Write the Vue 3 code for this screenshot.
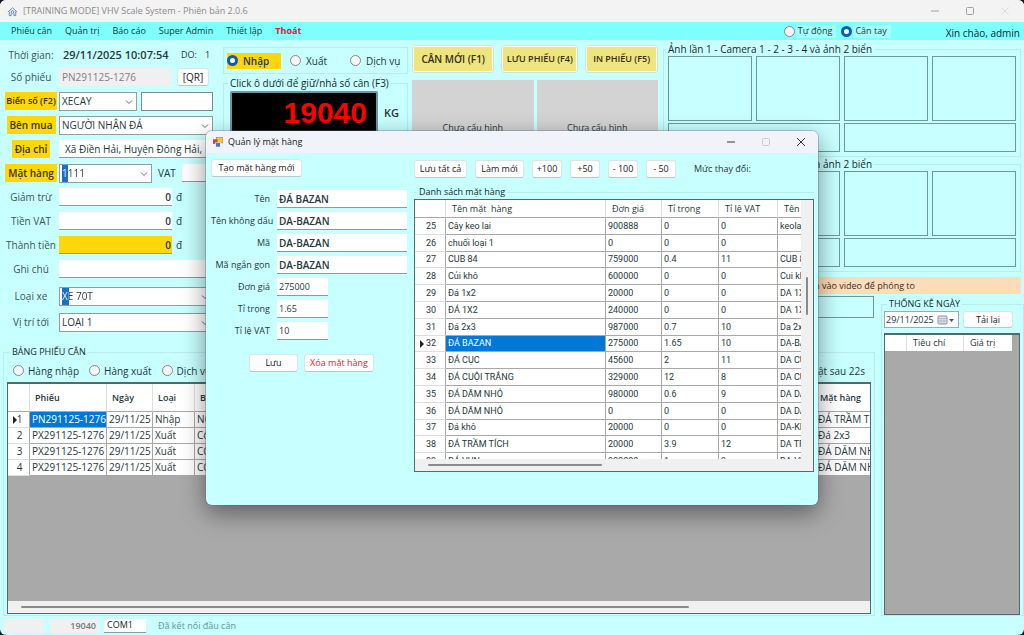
<script setup>
import { ref } from 'vue'

const menu = ['Phiếu cân', 'Quản trị', 'Báo cáo', 'Super Admin', 'Thiết lập']
const mode = ref('manual')
const kind = ref('in')
const filter = ref('')

const amounts = [
  { id: 'discount', label: 'Giảm trừ', value: '0' },
  { id: 'vat-money', label: 'Tiền VAT', value: '0' },
  { id: 'total', label: 'Thành tiền', value: '0', gold: true },
]

const tickets = [
  ['PN291125-1276', '29/11/25', 'Nhập', 'NGƯỜI NHẬN ĐÁ', 'ĐÁ TRẦM TÍCH'],
  ['PX291125-1276', '29/11/25', 'Xuất', 'Công ty', 'Đá 2x3'],
  ['PX291125-1276', '29/11/25', 'Xuất', 'CÔNG TY', 'ĐÁ DĂM NHỎ'],
  ['PX291125-1276', '29/11/25', 'Xuất', 'CÔNG TY', 'ĐÁ DĂM NHỎ'],
]

const fields = [
  { id: 'f-name', label: 'Tên', value: 'ĐÁ BAZAN', wide: true },
  { id: 'f-plain', label: 'Tên không dấu', value: 'DA-BAZAN', wide: true },
  { id: 'f-code', label: 'Mã', value: 'DA-BAZAN', wide: true },
  { id: 'f-short', label: 'Mã ngắn gọn', value: 'DA-BAZAN', wide: true },
  { id: 'f-price', label: 'Đơn giá', value: '275000' },
  { id: 'f-density', label: 'Tỉ trọng', value: '1.65' },
  { id: 'f-vat', label: 'Tỉ lệ VAT', value: '10' },
]

const steps = ['+100', '+50', '- 100', '- 50']

const items = [
  [25, 'Cây keo lai', '900888', '0', '0', 'keolai'],
  [26, 'chuối loại 1', '0', '0', '0', ''],
  [27, 'CUB 84', '759000', '0.4', '11', 'CUB 84'],
  [28, 'Củi khô', '600000', '0', '0', 'Cui kho'],
  [29, 'Đá 1x2', '20000', '0', '0', 'DA 1X2'],
  [30, 'ĐÁ 1X2', '240000', '0', '0', 'DA 1X2'],
  [31, 'Đá 2x3', '987000', '0.7', '10', 'Da 2x3'],
  [32, 'ĐÁ BAZAN', '275000', '1.65', '10', 'DA-BAZAN'],
  [33, 'ĐÁ CỤC', '45600', '2', '11', 'DA CUC'],
  [34, 'ĐÁ CUỘI TRẮNG', '329000', '12', '8', 'DA CUOI'],
  [35, 'ĐÁ DĂM NHỎ', '980000', '0.6', '9', 'DA DAM'],
  [36, 'ĐÁ DĂM NHỎ', '0', '0', '0', 'DA DAM'],
  [37, 'Đá khô', '20000', '0', '0', 'DA-KHO'],
  [38, 'ĐÁ TRẦM TÍCH', '20000', '3.9', '12', 'DA TRAM'],
  [39, 'ĐÁ VỤN', '980000', '1', '9', 'DA-VUN'],
]
</script>

<template>
  <div class="window">
    <header class="titlebar">
      <svg class="logo" viewBox="0 0 12 12" fill="none" stroke="#5f82b4" stroke-width="1">
        <path d="M1 6.500 6 2l5 4.500M2.500 6v4.500h2V8M9.500 6v4.500h-2V8" />
        <circle cx="6" cy="6.500" r="1.500" />
      </svg>
      <span>[TRAINING MODE] VHV Scale System - Phiên bản 2.0.6</span>
      <div class="winbtns">
        <button aria-label="Thu nhỏ"><svg viewBox="0 0 10 10"><path d="M1 5h8" /></svg></button>
        <button aria-label="Phóng to"><svg viewBox="0 0 10 10"><rect x="1.500" y="1.500" width="7" height="7" rx="1" /></svg></button>
        <button class="faint" aria-label="Đóng"><svg viewBox="0 0 10 10"><path d="M1.500 1.500l7 7M8.500 1.500l-7 7" /></svg></button>
      </div>
    </header>

    <nav class="menubar">
      <a v-for="m in menu" :key="m" href="#">{{ m }}</a>
      <a href="#" class="exit">Thoát</a>
      <div class="modes">
        <label><input v-model="mode" type="radio" name="mode" value="auto" />Tự động</label>
        <label><input v-model="mode" type="radio" name="mode" value="manual" />Cân tay</label>
      </div>
      <span class="hello">Xin chào, admin</span>
    </nav>

    <main class="body">
      <div class="entry">
        <section class="form">
          <div class="row first">
            <span class="lab">Thời gian:</span>
            <strong class="clock">29/11/2025 10:07:54</strong>
            <span class="do">DO:</span><span class="do-n">1</span>
          </div>
          <div class="row">
            <label class="lab" for="ticket">Số phiếu</label>
            <input id="ticket" class="txt amount off" value="PN291125-1276" disabled />
            <button class="btn qr">[QR]</button>
          </div>
          <div class="row">
            <label class="lab key" for="plate"><span>Biển số (F2)</span></label>
            <div class="combo plate">
              <select id="plate"><option>XECAY</option></select>
              <svg class="chev" viewBox="0 0 8 8"><path d="M1 2.500l3 3 3-3" /></svg>
            </div>
            <input class="txt boxed grow" aria-label="Số xe" />
          </div>
          <div class="row">
            <label class="lab key" for="buyer"><span>Bên mua</span></label>
            <div class="combo grow">
              <select id="buyer"><option>NGƯỜI NHẬN ĐÁ</option></select>
              <svg class="chev" viewBox="0 0 8 8"><path d="M1 2.500l3 3 3-3" /></svg>
            </div>
          </div>
          <div class="row">
            <label class="lab key" for="addr"><span>Địa chỉ</span></label>
            <input id="addr" class="txt grow strong" value="Xã Điền Hải, Huyện Đông Hải," />
          </div>
          <div class="row">
            <label class="lab key" for="goods"><span>Mặt hàng</span></label>
            <div class="combo goods">
              <input id="goods" class="picked narrow" value="1111" />
              <svg class="chev" viewBox="0 0 8 8"><path d="M1 2.500l3 3 3-3" /></svg>
            </div>
            <label class="vat" for="vat">VAT</label>
            <input id="vat" class="txt grow" />
          </div>
          <div v-for="a in amounts" :key="a.id" class="row">
            <label class="lab" :for="a.id">{{ a.label }}</label>
            <input :id="a.id" class="txt amount right" :class="{ gold: a.gold }" :value="a.value" />
            <span class="unit">đ</span>
          </div>
          <div class="row">
            <label class="lab" for="note">Ghi chú</label>
            <input id="note" class="txt grow" />
          </div>
          <div class="row tall">
            <label class="lab" for="truck">Loại xe</label>
            <div class="combo grow">
              <input id="truck" class="picked" value="XE 70T" />
              <svg class="chev" viewBox="0 0 8 8"><path d="M1 2.500l3 3 3-3" /></svg>
            </div>
          </div>
          <div class="row tall">
            <label class="lab" for="dest">Vị trí tới</label>
            <div class="combo grow">
              <select id="dest"><option>LOẠI 1</option></select>
              <svg class="chev" viewBox="0 0 8 8"><path d="M1 2.500l3 3 3-3" /></svg>
            </div>
          </div>
        </section>

        <section class="scale">
          <div class="kinds">
            <label :class="{ on: kind === 'in' }"><input v-model="kind" type="radio" name="kind" value="in" />Nhập</label>
            <label><input v-model="kind" type="radio" name="kind" value="out" />Xuất</label>
            <label><input v-model="kind" type="radio" name="kind" value="svc" />Dịch vụ</label>
          </div>
          <fieldset class="weigh">
            <legend>Click ô dưới để giữ/nhả số cân (F3)</legend>
            <div class="read">
              <output class="led">19040</output>
              <span class="kg">KG</span>
            </div>
          </fieldset>
        </section>

        <section class="actions">
          <div class="cmds">
            <button class="cmd big">CÂN MỚI (F1)</button>
            <button class="cmd">LƯU PHIẾU (F4)</button>
            <button class="cmd small">IN PHIẾU (F5)</button>
          </div>
          <div class="feeds">
            <div>Chưa cấu hình</div>
            <div>Chưa cấu hình</div>
          </div>
        </section>
      </div>

      <section class="cameras">
        <fieldset v-for="n in 2" :key="n" class="shots">
          <legend>Ảnh lần {{ n }} - Camera 1 - 2 - 3 - 4 và ảnh 2 biển</legend>
          <div class="cams"><i v-for="c in 4" :key="c"></i></div>
          <div class="plates"><i></i><i></i></div>
        </fieldset>
        <p class="hint">Nhấn vào video để phóng to</p>
      </section>

      <div class="strip"><div></div></div>

      <fieldset class="stats">
        <legend>THỐNG KÊ NGÀY</legend>
        <div class="pick">
          <div class="date">
            <input aria-label="Ngày" value="29/11/2025" />
            <svg viewBox="0 0 18 10">
              <rect x="1" y="1" width="9" height="8" rx="1" fill="#dfe3ee" stroke="#8a8fa5" />
              <path d="M1 3.500h9M4 3.500V9M7 3.500V9M1 6h9" stroke="#a9aec0" stroke-width=".7" />
              <path d="M12 4h5l-2.500 3z" fill="#44546e" />
            </svg>
          </div>
          <button class="btn grow">Tải lại</button>
        </div>
        <div class="grid dark">
          <table class="stat-table">
            <thead><tr><th class="c0"></th><th class="c1">Tiêu chí</th><th class="c2">Giá trị</th></tr></thead>
          </table>
        </div>
      </fieldset>

      <fieldset class="tickets">
        <legend>BẢNG PHIẾU CÂN</legend>
        <div class="filters">
          <label><input v-model="filter" type="radio" name="filter" value="in" />Hàng nhập</label>
          <label><input v-model="filter" type="radio" name="filter" value="out" />Hàng xuất</label>
          <label><input v-model="filter" type="radio" name="filter" value="svc" />Dịch vụ</label>
          <span class="refresh">Cập nhật sau 22s</span>
        </div>
        <div class="grid dark">
          <table class="ticket-table">
            <colgroup><col class="w0" /><col class="w1" /><col class="w2" /><col class="w3" /><col /><col class="w5" /></colgroup>
            <thead>
              <tr><th></th><th>Phiếu</th><th>Ngày</th><th>Loại</th><th>Bên mua</th><th>Mặt hàng</th></tr>
            </thead>
            <tbody>
              <tr v-for="(t, i) in tickets" :key="i" :class="{ sel: i === 0 }">
                <td class="num"><svg v-if="i === 0" class="cur" viewBox="0 0 4 8"><path d="M0 0l4 4-4 4z" /></svg>{{ i + 1 }}</td>
                <td v-for="(c, j) in t" :key="j">{{ c }}</td>
              </tr>
            </tbody>
          </table>
          <div class="hbar"><i></i></div>
        </div>
      </fieldset>
    </main>

    <footer class="status">
      <input class="sb s1" aria-label="Trạng thái" disabled />
      <input class="sb s2" aria-label="Số cân" value="19040" disabled />
      <input class="sb s3" aria-label="Cổng" value="COM1" />
      <span>Đã kết nối đầu cân</span>
    </footer>

    <div class="dialog" role="dialog" aria-label="Quản lý mặt hàng">
      <header class="dlg-title">
        <svg class="app" viewBox="0 0 11 11">
          <rect x="4" y="0" width="7" height="6" fill="#f2c53d" stroke="#8b7a4a" stroke-width=".6" />
          <rect x="0" y="2" width="5" height="5" fill="#c9433a" />
          <rect x="3" y="5.500" width="5" height="5" fill="#4d74c4" stroke="#fff" stroke-width=".6" />
        </svg>
        <span>Quản lý mặt hàng</span>
        <div class="winbtns">
          <button aria-label="Thu nhỏ"><svg viewBox="0 0 10 10"><path d="M1 5h8" /></svg></button>
          <button class="faint" aria-label="Phóng to"><svg viewBox="0 0 10 10"><rect x="1.500" y="1.500" width="7" height="7" rx="1" /></svg></button>
          <button aria-label="Đóng"><svg viewBox="0 0 10 10"><path d="M1 1l8 8M9 1l-8 8" /></svg></button>
        </div>
      </header>
      <div class="dlg-body">
        <section class="editor">
          <button class="btn create">Tạo mặt hàng mới</button>
          <div class="fields">
            <div v-for="f in fields" :key="f.id" class="field">
              <label :for="f.id">{{ f.label }}</label>
              <input :id="f.id" class="txt" :class="{ wide: f.wide }" :value="f.value" />
            </div>
          </div>
          <div class="save">
            <button class="btn ok">Lưu</button>
            <button class="btn del">Xóa mặt hàng</button>
          </div>
        </section>
        <section class="list">
          <div class="tools">
            <button class="btn t1">Lưu tất cả</button>
            <button class="btn t2">Làm mới</button>
            <button v-for="s in steps" :key="s" class="btn t3">{{ s }}</button>
            <span>Mức thay đổi:</span>
          </div>
          <fieldset class="items">
            <legend>Danh sách mặt hàng</legend>
            <div class="grid light">
              <div class="view">
                <table class="item-table">
                  <colgroup><col class="v0" /><col class="v1" /><col class="v2" /><col class="v3" /><col class="v4" /><col class="v5" /></colgroup>
                  <thead>
                    <tr><th></th><th>Tên mặt&nbsp; hàng</th><th>Đơn giá</th><th>Tỉ trọng</th><th>Tỉ lệ VAT</th><th>Tên</th></tr>
                  </thead>
                  <tbody>
                    <tr v-for="r in items" :key="r[0]" :class="{ sel: r[0] === 32 }">
                      <td class="num"><svg v-if="r[0] === 32" class="cur" viewBox="0 0 4 8"><path d="M0 0l4 4-4 4z" /></svg>{{ r[0] }}</td>
                      <td v-for="k in 5" :key="k">{{ r[k] }}</td>
                    </tr>
                  </tbody>
                </table>
              </div>
              <div class="vbar"><i></i></div>
              <div class="hbar"><i></i></div>
            </div>
          </fieldset>
        </section>
      </div>
    </div>
  </div>
</template>

<style>
html { background: #16161f; }
body { margin: 0; overflow: hidden; }
</style>

<style scoped>
* { box-sizing: border-box; }
.window {
  position: relative; display: flex; flex-direction: column; min-height: 100vh;
  background: #c8ffff; border-radius: 6px; overflow: hidden;
  font-family: "Open Sans", "Noto Sans", sans-serif; font-size: 10px; line-height: 14px; color: #26383a;
}
button, input, select { font: inherit; color: inherit; margin: 0; border-radius: 0; min-width: 0; }
fieldset { margin: 0; padding: 0; min-width: 0; border: 1px solid #b9ecec; }
legend { padding: 0 2px; margin-left: 4px; color: #16292b; }
.grow { flex: 1; }

.titlebar { display: flex; align-items: center; height: 22px; padding: 0 2px 0 7px; gap: 5px; background: #f3f3f3; color: #8a8a8a; font-size: 9px; }
.logo { width: 11px; height: 11px; }
.winbtns { margin-left: auto; display: flex; }
.winbtns button { width: 35px; height: 20px; padding: 0; border: 0; background: none; display: grid; place-items: center; color: #a0a0a0; }
.winbtns svg { width: 10px; height: 10px; fill: none; stroke: currentColor; stroke-width: 1; }
.winbtns .faint { color: #dcdcdc; }

.menubar { display: flex; align-items: center; height: 18px; padding: 0 4px 0 11px; gap: 13px; background: #80ffff; font-size: 9px; }
.menubar a { color: #16393c; text-decoration: none; }
.menubar .exit { color: #d8222a; font-weight: 700; }
.modes { margin-left: auto; display: flex; gap: 5px; font-size: 9px; }
.modes label { display: flex; align-items: center; gap: 3px; height: 13px; padding-right: 4px; background: linear-gradient(90deg, transparent 12px, #a4ffff 12px); }
.hello { margin-left: 42px; padding-top: 4px; font-size: 10px; font-weight: 500; color: #123; }

input[type="radio"] { appearance: none; width: 11px; height: 11px; border: 1px solid #868686; border-radius: 50%; background: #f6f6f6; flex: none; }
input[type="radio"]:checked { border: 3px solid #0a5cb8; background: #fff; }

.body {
  flex: 1; display: grid;
  grid-template-columns: minmax(0, 663fr) minmax(0, 216fr) minmax(0, 145fr);
  grid-template-rows: 256px 46px minmax(0, 1fr);
}
.entry { grid-column: 1; grid-row: 1 / 3; display: grid; grid-template-columns: 223px 187px 1fr; padding-top: 4px; }
.form { padding: 0 10px 0 3px; }
.row { display: flex; align-items: center; height: 24px; }
.row.first { height: 21px; }
.row.tall { height: 26px; }
.row.tall:nth-last-child(2) { margin-top: 2px; }
.lab { width: 56px; text-align: center; flex: none; color: #3c5557; white-space: nowrap; }
.lab.key { color: #3a3410; font-weight: 600; display: flex; justify-content: center; }
.lab.key span { background: #fdd60c; padding: 2px 3px; }
.row:nth-child(3) .lab { font-size: 9px; }
.row:nth-child(3) .lab span { padding: 2px 1px; }
.clock { padding-left: 4px; width: 122px; font-size: 11px; font-weight: 600; white-space: nowrap; }
.do { width: 24px; font-size: 9px; }
.do-n { font-size: 9px; }
.txt { height: 18px; padding: 0 3px; border: 0; border-bottom: 1px solid #8a9c9c; background: #fff; }
.txt.off { background: #f0f0f0; border-color: #f0f0f0; color: #808080; }
.txt.boxed { border: 1px solid #7d8b8b; height: 19px; margin-left: 4px; }
.txt.strong { font-weight: 500; padding-left: 6px; }
.amount { width: 113px; }
.right { text-align: right; font-weight: 600; padding-right: 1px; }
.txt.gold { background: #fdd60c; }
.unit { padding-left: 4px; font-weight: 500; }
.btn { height: 18px; padding: 0; border: 1px solid #d8e6e6; border-bottom-color: #b8c8c8; border-radius: 3px; background: #fdfdfd; color: #222; white-space: nowrap; font-size: 9px; font-weight: 500; }
.qr { width: 32px; margin-left: 5px; font-size: 10px; }
.combo { position: relative; height: 19px; }
.combo select, .combo input { width: 100%; height: 100%; appearance: none; padding: 0 14px 0 2px; border: 1px solid #8ca0a0; background: #fff; font-weight: 500; }
.combo .picked {
  color: transparent;
  background-image: linear-gradient(90deg, #fff 7px, #26383a 7px), linear-gradient(90deg, #1a6fc9 7px, #fff 7px);
  background-clip: text, padding-box;
  background-origin: content-box, content-box;
  background-repeat: no-repeat;
}
.combo .picked.narrow {
  background-image: linear-gradient(90deg, #fff 6px, #26383a 6px), linear-gradient(90deg, #1a6fc9 6px, #fff 6px);
}
.chev { position: absolute; right: 4px; top: 6px; width: 8px; height: 8px; fill: none; stroke: #667; pointer-events: none; }
.plate { width: 78px; }
.goods { width: 93px; }
.vat { padding: 0 6px; font-size: 10px; font-weight: 500; }

.scale { padding-right: 2px; }
.kinds { display: flex; align-items: center; gap: 9px; margin-top: 3px; height: 27px; padding: 0 0 0 3px; border: 1px solid #b9ecec; }
.kinds label { display: flex; align-items: center; gap: 5px; width: 51px; font-weight: 500; height: 16px; white-space: nowrap; }
.kinds .on { width: 54px; background: #fdd60c; font-weight: 600; }
.weigh { margin-top: 2px; height: 100px; }
.weigh legend { font-weight: 500; line-height: 14px; }
.read { display: flex; align-items: center; gap: 6px; padding: 1px 6px; }
.led { width: 148px; height: 43px; border: 2px solid #6f95a8; border-radius: 2px; background: #000; color: #f00; font: 700 30px/39px "Liberation Sans", Arial, sans-serif; text-align: right; padding-right: 9px; }
.kg { font-size: 11px; font-weight: 600; }

.actions { padding: 1px 5px 0 2px; }
.cmds { display: flex; gap: 7px; }
.cmd { flex: 76; height: 28px; padding: 0; border: 2px solid #fbfbee; outline: 1px solid #cfe3d8; outline-offset: -1px; border-radius: 3px; background: #f0e47e; font-size: 9px; font-weight: 600; color: #333116; white-space: nowrap; }
.cmd.big { flex: 82; font-size: 10px; }
.cmd.small { flex: 72; }
.feeds { display: grid; grid-template-columns: 1fr 1fr; gap: 3px; margin-top: 7px; height: 96px; }
.feeds div { display: grid; place-items: center; background: #d3d3d3; font-size: 9px; }

.cameras { grid-column: 2 / 4; grid-row: 1; padding: 2px 3px 0 0; }
.shots { height: 115px; }
.shots legend { font-weight: 500; margin-left: 2px; }
.shots .cams, .shots .plates { display: grid; grid-template-columns: repeat(4, 1fr); gap: 4px; padding: 0 4px; }
.shots i { border: 1px solid #6f9a9a; height: 65px; }
.shots .plates { grid-template-columns: 1fr 1fr; margin-top: 2px; }
.shots .plates i { height: 29px; }
.hint { margin: 5px 0 0 5px; height: 17px; line-height: 17px; padding-right: 106px; text-align: right; background: #ffdcb9; color: #33302a; font-size: 9px; }

.strip { grid-column: 2; grid-row: 2; padding: 0 5px; }
.strip div { height: 22px; border: 1px solid #6f9a9a; }

.stats { grid-column: 3; grid-row: 2 / 4; margin: 1px 0 0 2px; padding: 0 3px 0 2px; display: flex; flex-direction: column; }
.stats legend { margin-left: 3px; line-height: 14px; font-size: 9px; }
.pick { display: flex; gap: 4px; padding-right: 7px; margin-bottom: 5px; }
.date { display: flex; align-items: center; width: 75px; height: 17px; background: #fff; border: 1px solid #9ab; }
.date input { width: 52px; padding: 0 0 0 1px; border: 0; font-size: 9px; background: none; }
.date svg { width: 18px; height: 10px; }
.pick .btn { height: 17px; }

.grid { position: relative; border: 2px solid #4f6c6c; overflow: hidden; }
.grid.dark { flex: 1; background: #a9a9a9; border-width: 1px; border-top-width: 2px; }
table { border-collapse: separate; border-spacing: 0; table-layout: fixed; background: #fff; }
th, td { padding: 0; text-align: left; white-space: nowrap; overflow: hidden; border-right: 1px solid #a8a8a8; border-bottom: 1px solid #a8a8a8; }
th { font-weight: 600; border-right-color: #dedede; }
td.num { text-align: center; border-color: #dedede; border-right-color: #a8a8a8; position: relative; }
.cur { position: absolute; left: 5px; top: 4px; width: 4px; height: 8px; fill: #222; }
.sel td:nth-child(2) { background: #0078d7; color: #fff; }

.stat-table th { height: 16px; font-size: 9px; font-weight: 500; border-bottom: 0; padding-left: 6px; }
.stat-table .c0 { width: 22px; }
.stat-table .c1 { width: 57px; }
.stat-table .c2 { width: 48px; border: 0; }

.tickets { grid-column: 1 / 3; grid-row: 3; margin: 3px 4px 0 3px; padding: 0 3px 1px; display: flex; flex-direction: column; }
.tickets legend { font-size: 9px; margin-left: 3px; }
.filters { display: flex; align-items: center; gap: 10px; height: 23px; padding: 0 6px; }
.filters label { display: flex; align-items: center; gap: 4px; }
.filters .refresh { margin-left: auto; }
.tickets .grid { display: flex; flex-direction: column; }
.ticket-table { width: 100%; }
.ticket-table th { height: 28px; padding-left: 5px; font-size: 9px; }
.ticket-table td { height: 16px; padding-left: 2px; line-height: 15px; }
.ticket-table .w0 { width: 22px; }
.ticket-table .w1 { width: 77px; }
.ticket-table .w2 { width: 46px; }
.ticket-table .w3 { width: 42px; }
.ticket-table .w5 { width: 54px; }
.ticket-table th:last-child { padding-left: 4px; }
.ticket-table th:last-child, .ticket-table td:last-child { border-right: 0; }
.tickets .hbar { margin-top: auto; height: 12px; padding: 5px 181px 0 13px; background: #f0f0f0; }
.hbar i { display: block; height: 2px; background: #8a8a8a; border-radius: 1px; }

.status { display: flex; align-items: center; height: 19px; padding: 0 4px; color: #6a9293; font-size: 9px; }
.sb { height: 14px; border: 0; padding: 0 3px; font-size: 9px; background: #f0f0f0; }
.s1 { width: 40px; }
.s2 { width: 49px; margin: 0 5px 0 6px; text-align: right; font-weight: 600; color: #777; }
.s3 { width: 42px; margin-right: 12px; background: #fff; border-bottom: 1px solid #8a9c9c; color: #222; }

.dialog { position: absolute; left: 206px; top: 131px; width: 612px; border-radius: 6px; overflow: hidden; background: #c8ffff; box-shadow: 0 0 0 1px rgba(90, 110, 120, .35), 0 8px 24px rgba(0, 0, 0, .45); }
.dlg-title { display: flex; align-items: center; height: 22px; padding-left: 7px; gap: 5px; background: #f0f3fa; color: #222; font-size: 9px; }
.dlg-title .app { width: 10px; height: 11px; }
.dlg-title .winbtns button { color: #333; }
.dlg-title .winbtns .faint { color: #ccc; }
.dlg-body { display: grid; grid-template-columns: 208px 1fr; height: 352px; }
.editor { padding: 6px 7px 0 5px; }
.create { width: 91px; }
.fields { margin-top: 11px; }
.field { display: flex; align-items: center; height: 22px; }
.field label { width: 59px; text-align: right; margin-right: 7px; font-size: 9px; white-space: nowrap; }
.field .txt { width: 51px; height: 18px; padding: 0 2px; font-size: 9px; }
.field .txt.wide { width: 130px; font-size: 10px; font-weight: 600; }
.save { display: flex; gap: 6px; margin: 12px 0 0 38px; }
.ok { width: 49px; }
.del { width: 70px; color: #e0243a; }
.list { padding: 7px 4px 0 0; }
.tools { display: flex; align-items: center; gap: 8px; font-size: 9px; }
.t1 { width: 53px; }
.t2 { width: 49px; }
.t3 { width: 30px; }
.tools span { margin-left: 10px; }
.items { margin-top: 7px; border-width: 1px 0 0; }
.items legend { line-height: 14px; font-size: 9px; margin-left: 3px; }
.items .grid { display: grid; grid-template-columns: minmax(0, 1fr) 12px; grid-template-rows: 259px 12px; border-width: 1px; background: #f0f0f0; }
.view { overflow: hidden; }
.item-table { width: 407px; height: 270px; font-family: Roboto, "Open Sans", sans-serif; }
.item-table th { height: 18px; font-family: "Open Sans", sans-serif; font-size: 9px; font-weight: 500; padding-left: 6px; line-height: 14px; }
.item-table td { padding-left: 2px; line-height: 14px; font-size: 9px; }
.item-table .v0 { width: 31px; }
.item-table .v1 { width: 160px; }
.item-table .v2 { width: 56px; }
.item-table .v3 { width: 57px; }
.item-table .v4 { width: 59px; }
.vbar i { display: block; width: 2px; height: 38px; margin: 77px auto 0 5px; background: #8a8a8a; border-radius: 1px; }
.items .hbar { grid-column: 1 / 3; padding: 5px 211px 0 13px; }
</style>
